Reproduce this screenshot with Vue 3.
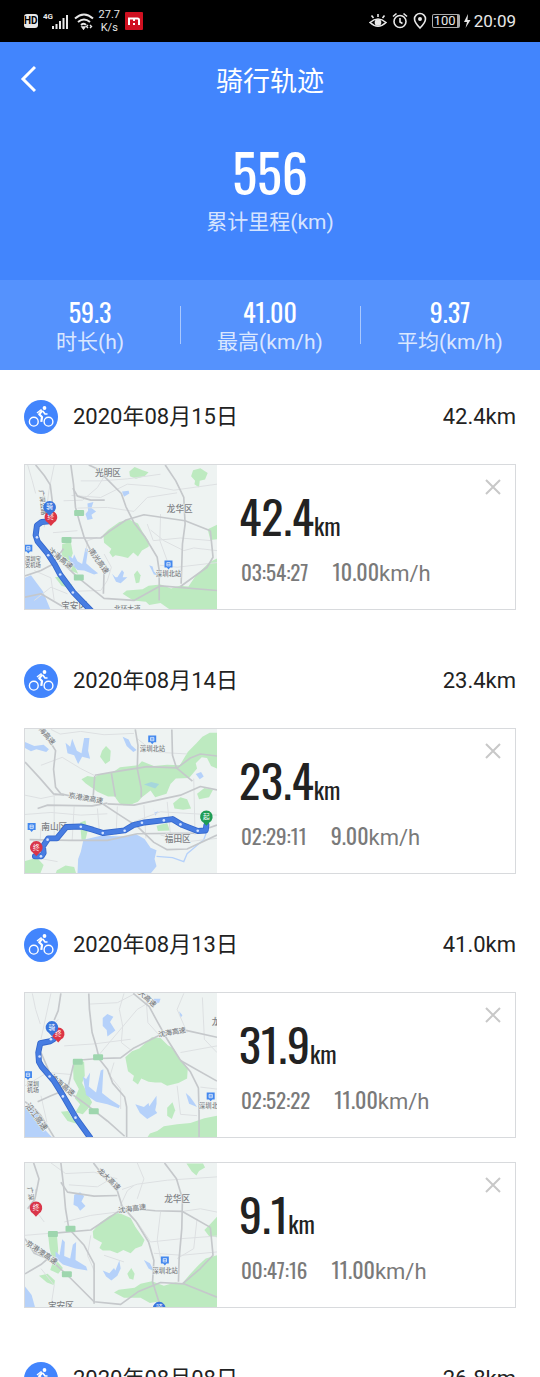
<script setup>
const stats = [
  { value: '59.3', label: '时长(h)' },
  { value: '41.00', label: '最高(km/h)' },
  { value: '9.37', label: '平均(km/h)' }
]

// every map is drawn in its own coordinates, 3 units to a pixel
const maps = {
  baoan: {
    viewBox: '12 12 578 434',
    water: [
      'M12 352L30 344L46 366L66 392L88 446H12Z',
      'M200 128L218 124L212 142L226 152L212 162L216 174L200 178L194 160L202 150Z',
      'M142 284L156 294L160 282L170 302L184 310L194 262L202 266L196 308L212 322L232 338L220 342L190 330L170 328L150 308Z',
      'M274 340L284 350L290 350L304 328L310 336L306 350L320 350L300 368L286 364Z',
      'M386 314L396 318L400 332L412 344L400 342Z',
      'M304 92L324 90L326 98L310 108Z'
    ],
    parks: [
      'M248 222L262 208L296 184L326 176L352 188L366 214L386 244L384 258L364 270L352 288L338 276L322 292L304 288L284 284L276 290L266 276L272 264L250 246Z',
      'M512 46L518 28L540 22L562 36L554 56L538 60L536 80L522 70L524 60Z',
      'M326 32L342 18L366 28L384 34L372 46L346 54L328 46Z',
      'M590 294V446H446L420 428L386 434L376 424L338 420L306 400L318 390L366 386L384 376L420 372L452 384L478 376L504 378L526 346L548 324L568 304Z',
      'M340 342L350 330L360 344L356 366L346 368Z',
      'M124 250L150 244L156 278L150 294L162 318L172 340L148 330L134 306L122 292Z',
      'M102 350L120 348L134 364L154 372L150 384L122 376Z',
      'M562 206L590 192V236L570 238Z'
    ],
    minor: [
      'M20 12L34 60L44 98', 'M100 12L84 90L70 200', 'M180 60H240L320 54L420 40', 'M152 104L240 110L320 70L400 76L460 88L590 70',
      'M252 44L230 80L186 118L128 120', 'M170 142L260 140L340 152L380 110L470 96', 'M380 190L398 240L480 232L574 240',
      'M170 210L96 216', 'M590 270L520 262L490 270L430 240L390 208', 'M230 230L200 240L196 274', 'M250 280L272 320L260 360L240 390L170 392',
      'M418 314L470 320L590 306', 'M40 330L90 352L100 420', 'M420 160L418 240L440 300', 'M40 420L90 380L140 400'
    ],
    roads: [
      'M44 12L70 44L88 72L94 120L90 160', 'M150 12L158 70L164 140L178 190L190 230L220 290L250 334L248 400',
      'M156 82L170 106L210 118H252', 'M204 12L230 24L258 54L302 98L316 138L340 186L374 230L410 290L416 330V420',
      'M142 232H240L266 212L316 178L370 162L494 180L570 210', 'M434 12L466 60L490 110L494 190L486 250L482 370',
      'M570 210L578 290L560 320L480 378', 'M12 346L60 330L94 312L128 264', 'M128 310L170 350L250 414L340 420L420 376L590 390',
      'M12 410L60 400L128 440'
    ],
    tags: [[175, 157], [137, 238], [174, 351]],
    labels: [
      { x: 262, y: 44, text: '光明区', size: 26 }, { x: 478, y: 154, text: '龙华区', size: 26 },
      { x: 444, y: 347, text: '深圳北站', size: 19 }, { x: 36, y: 300, text: '深圳宝', size: 16 }, { x: 36, y: 318, text: '安机场', size: 16 },
      { x: 228, y: 306, text: '南光高速', size: 22, rotate: 54 }, { x: 114, y: 300, text: '沈海高速', size: 22, rotate: 38 },
      { x: 58, y: 126, text: '广深公路', size: 19, rotate: 84 }, { x: 160, y: 447, text: '宝安区', size: 26 }, { x: 320, y: 453, text: '北环大道', size: 20 }
    ],
    stations: [[444, 312], [22, 264]],
    route: 'M84 182L62 184L48 194L44 224L50 242L78 276L102 312L118 342L158 396L210 450',
    arrows: [[48, 230], [82, 284], [118, 342], [156, 396]],
    pins: [{ x: 90, y: 170, color: '#dc3545', text: '终' }, { x: 86, y: 140, color: '#3976dd', text: '骑' }]
  },
  nanshan: {
    viewBox: '12 9 578 437',
    water: [
      'M170 446L172 402L180 380L188 344L240 332L320 334L344 326L372 342L390 368L408 376L402 402L408 424L390 446Z',
      'M134 52L148 64L154 40L168 76L182 84L190 38L206 38L202 76L208 100L184 94L172 116L160 90L140 84Z',
      'M12 50L40 62L68 58L84 72L76 80L46 72L30 78L12 68Z',
      'M306 34L324 42L332 60L348 74L338 80L318 62Z', 'M526 146L542 140L550 154L538 162Z', 'M398 246L402 262L414 258L404 272Z'
    ],
    parks: [
      'M182 162L200 152L222 156L236 146L276 142L298 126L352 120L364 108L400 122L440 118L478 120L502 80L528 54L546 34L568 22H590V130L572 122L560 98L544 96L526 114L530 130L506 158L466 160L450 176L438 206L404 216L390 196L364 216L352 230L326 240L308 240L296 234L282 214L262 214L230 200L194 174Z',
      'M238 94L244 76L256 62L270 76L268 106L254 116Z',
      'M458 234L480 216L500 222L512 250L488 254L462 250Z', 'M530 206L552 188L578 194L566 216L536 222Z',
      'M12 408L48 398L68 420L58 446H12Z', 'M108 436L134 422L160 426L166 446H104Z', 'M178 292L194 286L200 320L194 344L182 344Z', 'M408 302L440 294L448 316L412 318Z'
    ],
    pond: 'M370 178L392 170L416 176L404 190Z',
    minor: [
      'M12 210L60 220L128 206', 'M60 120L124 96L180 130L220 150', 'M90 12L118 26L180 18L250 28L340 24', 'M350 40L400 80L500 86',
      'M100 210V340', 'M160 244L154 346', 'M230 250L236 320', 'M290 244L286 330', 'M370 240L376 340', 'M520 160L524 330', 'M12 268L90 262L180 270L260 266',
      'M60 310L54 400L110 410', 'M340 290L420 260L590 270', 'M590 340L500 350L420 330', 'M440 230L450 330'
    ],
    roads: [
      'M58 12L82 40L104 76L98 132L104 186L120 206L240 232L288 264L350 304L400 352L440 374L500 372L590 330',
      'M12 110L56 158L98 206L130 210', 'M50 250L80 240L214 242L260 234', 'M344 12L352 60L350 130L362 190V216',
      'M222 152L216 230', 'M272 144L284 214', 'M454 12L456 90L468 128L516 168', 'M590 92L540 86L510 98L470 128L380 124L280 140L222 150',
      'M260 236L340 240L480 210L540 184L590 194', 'M26 344L150 346L260 346L350 326L520 324L590 300'
    ],
    coast: 'M408 394L456 398L490 410L500 386L524 366L550 344L560 318',
    tags: [],
    labels: [
      { x: 100, y: 314, text: '南山区', size: 26 }, { x: 472, y: 352, text: '福田区', size: 26 }, { x: 396, y: 77, text: '深圳北站', size: 19 },
      { x: 194, y: 226, text: '京港澳高速', size: 21, rotate: 10 }, { x: 66, y: 28, text: '沈海高速', size: 21, rotate: 50 }
    ],
    stations: [[395, 42], [32, 306]],
    route: 'M42 394L62 394L68 384L66 364L82 340H108L136 306L180 304L216 314L248 324L312 316L338 300L372 292L456 282L486 300L532 318L556 316L558 300',
    arrows: [[60, 394], [80, 344], [180, 305], [246, 324], [312, 317], [364, 293], [430, 286], [480, 298], [532, 317]],
    pins: [{ x: 46, y: 368, color: '#d9364a', text: '终' }, { x: 558, y: 276, color: '#1f9d55', text: '起' }]
  },
  coast: {
    viewBox: '12 9 578 437',
    water: [
      'M12 352L34 350L50 366L60 386L70 420L94 446H12Z',
      'M246 86L260 74L278 82L268 98L284 124L270 134L260 142L258 122L246 110Z',
      'M186 262L196 270L208 250L204 292L226 310L240 244L248 240L244 312L270 332L298 350L294 358L260 346L226 338L196 318Z',
      'M344 346L370 354L384 342L386 352L408 320L408 344L404 364L410 372L380 390L358 372Z',
      'M496 312L508 322L518 336L530 354L506 344Z', 'M400 28H420L416 40L398 42Z', 'M476 66L486 78L480 86Z'
    ],
    parks: [
      'M314 204L334 186L356 178L394 144L420 146L442 168L460 178L478 212L502 238L500 268L474 282L440 290L422 280H404L384 278L362 268L352 286L336 274L340 260L322 246Z',
      'M156 214L190 218L192 260L184 282L198 310L214 340L206 354L186 376L164 370L178 346L162 328L174 300L158 270Z',
      'M120 368L142 366L152 384L172 390L168 404L140 396Z', 'M440 356L456 340L464 364L454 390L440 380Z',
      'M388 434L410 426L430 412L470 406L510 402L552 388L590 380V446H380Z'
    ],
    minor: [
      'M34 12L44 60L58 104', 'M112 90L94 110', 'M90 12L60 150', 'M208 44L290 40L340 14', 'M310 12L296 60L306 110L302 160L330 182',
      'M130 170L220 164L330 150', 'M232 200L350 60L384 40', 'M376 20L382 100L418 140', 'M500 130L470 60L490 12', 'M480 190L590 170',
      'M546 24L552 150L590 190', 'M280 220L268 260L300 300L300 360', 'M60 320L78 400', 'M12 290L80 250L150 256', 'M470 290L480 376L530 380', 'M590 300L540 294'
    ],
    roads: [
      'M120 12L112 64L100 92', 'M204 12L206 60L214 130L226 170L236 210L260 240L276 282L312 324L318 354V446',
      'M338 12L386 52L412 100L440 150L478 210L510 248L534 296L536 370V446', 'M160 214L234 208L300 206L340 176L412 140L456 122L500 124L590 144',
      'M60 190L86 250L120 296L160 320L196 346L260 396L312 442', 'M50 338L90 320L140 300L158 226', 'M12 338L40 358L60 380L100 446', 'M480 214L590 276'
    ],
    tags: [[232, 204], [171, 218], [219, 367]],
    labels: [
      { x: 456, y: 136, text: '沈海高速', size: 21, rotate: -10 }, { x: 368, y: 26, text: '龙大高速', size: 21, rotate: 42 },
      { x: 120, y: 294, text: '沈海高速', size: 22, rotate: 40 }, { x: 40, y: 388, text: '沿江高速', size: 24, rotate: 54 },
      { x: 36, y: 290, text: '深圳', size: 18 }, { x: 36, y: 308, text: '机场', size: 18 }, { x: 574, y: 358, text: '深圳北站', size: 19 },
      { x: 587, y: 107, text: '龙', size: 26 }
    ],
    stations: [[571, 322], [21, 258]],
    route: 'M98 150L88 156L58 162L52 190L54 218L62 232L98 274L128 322L166 388L208 446',
    arrows: [[90, 150], [56, 202], [86, 262], [126, 322], [164, 386]],
    pins: [{ x: 112, y: 134, color: '#dc3545', text: '终' }, { x: 93, y: 115, color: '#3976dd', text: '骑' }]
  },
  longhua: {
    viewBox: '12 12 578 434',
    water: [
      'M12 384L32 410L42 446H12Z', 'M160 108L178 100L190 112L182 128L194 142L178 156L170 144L158 138Z',
      'M104 278L116 290L124 242L132 250L130 292L148 300L156 258L166 250L164 304L196 324L200 336L164 330L126 318L104 298Z',
      'M246 336L266 344L280 328L284 336L296 306L300 330L290 352L272 366L256 354Z', 'M370 304L388 314L402 340L384 330Z'
    ],
    parks: [
      'M216 218L238 192L266 172L294 162L330 178L344 204L372 244L364 262L344 270L330 284L308 274L290 284L268 276L246 276L236 268L244 252L218 238Z',
      'M498 14H548L554 26L536 36L528 50L514 38Z',
      'M590 290V446H430L410 430L388 434L360 418L310 418L280 402L294 394L342 388L360 376L394 368L430 382L464 372L486 374L508 348L534 320L556 300Z',
      'M552 214L572 194L590 174V236L566 232Z', 'M320 346L332 328L342 346L338 364L326 360Z',
      'M82 232L108 230L112 276L106 304L126 328L112 346L88 334L96 310L86 270Z', 'M54 352L80 346L102 366L100 380L78 372Z'
    ],
    minor: [
      'M90 12L134 44L220 40L290 60', 'M144 78L230 84L270 60', 'M350 12L370 60L350 120', 'M304 92L350 76L440 64L590 54', 'M130 190L210 170L290 160',
      'M12 230L60 226L92 224', 'M210 230L200 290L222 340', 'M290 160L320 96L340 80', 'M350 190L390 250L484 240L590 232', 'M420 160L410 244L420 300',
      'M590 160L540 150L486 158', 'M400 284L484 290L590 280', 'M70 190L40 150L44 90', 'M250 290L310 310', 'M60 330L100 380L90 446', 'M530 180L520 270L470 300'
    ],
    roads: [
      'M120 12L128 80L134 150L144 210L190 260L220 316V436', 'M38 12L54 60L42 120L20 150', 'M218 12L244 46L290 96L304 142L346 188L384 250L400 306L396 370L420 446',
      'M92 224L210 214L290 160L340 150L404 156L486 158L570 206', 'M432 12L468 60L486 120L484 210L476 300L474 370',
      'M570 206L578 290L540 330L486 376', 'M12 240L40 284L92 306L150 360L220 430L300 438L352 400L420 372L490 376L590 416', 'M12 346L60 318L92 290', 'M120 70L140 100L220 112L290 110'
    ],
    tags: [[149, 210], [96, 226], [138, 347]],
    labels: [
      { x: 470, y: 130, text: '龙华区', size: 26 }, { x: 434, y: 342, text: '深圳北站', size: 19 },
      { x: 260, y: 66, text: '龙大高速', size: 21, rotate: 44 }, { x: 336, y: 157, text: '沈海高速', size: 21, rotate: -8 },
      { x: 58, y: 288, text: '京港澳高速', size: 22, rotate: 34 }, { x: 22, y: 106, text: '广深', size: 20, rotate: 80 }, { x: 120, y: 453, text: '宝安区', size: 26 }
    ],
    stations: [[433, 306]],
    route: '',
    arrows: [],
    pins: [{ x: 45, y: 148, color: '#d9364a', text: '终' }, { x: 416, y: 450, color: '#3976dd', text: '骑' }]
  }
}

const days = [
  { date: '2020年08月15日', total: '42.4km', rides: [{ map: maps.baoan, distance: '42.4', time: '03:54:27', speed: '10.00' }] },
  { date: '2020年08月14日', total: '23.4km', rides: [{ map: maps.nanshan, distance: '23.4', time: '02:29:11', speed: '9.00' }] },
  {
    date: '2020年08月13日',
    total: '41.0km',
    rides: [
      { map: maps.coast, distance: '31.9', time: '02:52:22', speed: '11.00' },
      { map: maps.longhua, distance: '9.1', time: '00:47:16', speed: '11.00' }
    ]
  },
  { date: '2020年08月08日', total: '26.8km', rides: [] }
]
</script>

<template>
  <div class="page">
    <div class="status-bar">
      <div class="status-left">
        <span class="hd">HD</span>
        <svg class="signal" width="26" height="20" viewBox="0 0 26 20" fill="#e8e8e8">
          <text x="0" y="8" font-size="8" font-weight="700">4G</text>
          <path d="M9 15h2v3H9zM12.500 13h2v5h-2zM16 10h2v8h-2zM19.500 7h2v11h-2zM23 4h2v14h-2z"/>
        </svg>
        <svg width="20" height="18" viewBox="0 0 20 18" fill="none" stroke="#e8e8e8" stroke-width="2">
          <path d="M1 6.500Q10-1.500 19 6.500M4 10q6-5 12 0M7 13q3-2.500 5 0"/>
          <path d="M8 15h3l-1.500 2zM14 13l-1.500 1.500l1.500 1.500M16 13l1.500 1.500l-1.500 1.500" stroke-width="1.400"/>
        </svg>
        <span class="net-speed">27.7<br>K/s</span>
        <svg class="app-badge" width="18" height="18" viewBox="0 0 18 18">
          <rect width="18" height="18" rx="1" fill="#cf1020"/>
          <path d="M4 13V6.500h8.500q1.500 0 1.500 1.500v5M9 6v3M8 12h2" fill="none" stroke="#fff" stroke-width="2"/>
        </svg>
      </div>
      <div class="status-right">
        <svg width="18" height="18" viewBox="0 0 18 18" fill="none" stroke="#e8e8e8" stroke-width="1.600">
          <path d="M1 10.500Q9 3.500 17 10.500Q9 18 1 10.500ZM9 5V2M4.500 6L2.500 3.500M13.500 6l2-2.500"/>
          <circle cx="9" cy="10.500" r="2.500" fill="#e8e8e8"/>
        </svg>
        <svg width="16" height="18" viewBox="0 0 16 18" fill="none" stroke="#e8e8e8" stroke-width="1.600">
          <circle cx="8" cy="9.500" r="6"/>
          <path d="M8 6v4l2.500 1.500M1 4.500L4.500 1.500M15 4.500L11.500 1.500"/>
        </svg>
        <svg width="14" height="18" viewBox="0 0 14 18" fill="none" stroke="#e8e8e8" stroke-width="1.600">
          <path d="M7 16Q1.500 10.500 1.500 7a5.500 5.500 0 0 1 11 0Q12.500 10.500 7 16Z"/>
          <circle cx="7" cy="7" r="1.200" fill="#e8e8e8"/>
        </svg>
        <div class="power">
          <span class="battery">100</span>
          <svg width="8" height="14" viewBox="0 0 8 14" fill="#e8e8e8"><path d="M5 0L1 8h3L2.500 14L7.500 6h-3z"/></svg>
          <span class="clock">20:09</span>
        </div>
      </div>
    </div>

    <header class="hero">
      <div class="nav">
        <button class="back" type="button" aria-label="返回">
          <svg width="16" height="28" viewBox="0 0 16 28" fill="none" stroke="#fff" stroke-width="3">
            <path d="M15 2L3 14L15 26"/>
          </svg>
        </button>
        <h1>骑行轨迹</h1>
      </div>
      <div class="total num">556</div>
      <div class="label">累计里程(km)</div>
    </header>

    <section class="stats">
      <div v-for="s in stats" :key="s.label" class="stat">
        <div class="stat-value num">{{ s.value }}</div>
        <div class="label">{{ s.label }}</div>
      </div>
    </section>

    <main class="list">
      <section v-for="day in days" :key="day.date" class="day">
        <div class="day-head">
          <svg class="bike" width="34" height="34" viewBox="0 0 34 34" fill="none" stroke="#fff">
            <circle cx="17" cy="17" r="17" fill="#4285fd" stroke="none"/>
            <g stroke-width="1.400">
              <circle cx="9.800" cy="21.700" r="4.400"/>
              <circle cx="24.500" cy="21.700" r="4.400"/>
            </g>
            <circle cx="20.500" cy="8" r="1.900" fill="#fff" stroke="none"/>
            <g stroke-linejoin="round">
              <path d="M18.500 10.500L15.200 14.200L18 17L17.300 21.800" stroke-width="2.200"/>
              <path d="M18.800 11L21 14H23.500" stroke-width="1.600"/>
              <path d="M13 13L17.500 9.500" stroke-width="1.400"/>
            </g>
          </svg>
          <h2>{{ day.date }}</h2>
          <span>{{ day.total }}</span>
        </div>

        <article v-for="ride in day.rides" :key="ride.time" class="card">
          <svg class="map" :viewBox="ride.map.viewBox" preserveAspectRatio="xMidYMid slice">
            <rect width="620" height="470" fill="#eef3f2"/>
            <path v-for="d in ride.map.parks" :key="d" :d="d" fill="#bdeac0"/>
            <path v-for="d in ride.map.water" :key="d" :d="d" fill="#b5d1fa"/>
            <path v-if="ride.map.pond" :d="ride.map.pond" fill="#a5d6dc"/>
            <path v-if="ride.map.coast" :d="ride.map.coast" fill="none" stroke="#b5d1fa" stroke-width="4"/>
            <g fill="none" stroke-linejoin="round">
              <path v-for="d in ride.map.minor" :key="d" :d="d" stroke="#dde0e2" stroke-width="3"/>
              <path v-for="d in ride.map.roads" :key="d" :d="d" stroke="#c5c8cb" stroke-width="5"/>
            </g>
            <rect v-for="t in ride.map.tags" :key="t[0]" :x="t[0] - 15" :y="t[1] - 9" width="30" height="18" rx="3" fill="#9ed6ae"/>
            <text
              v-for="(l, i) in ride.map.labels"
              :key="i"
              :x="l.x"
              :y="l.y"
              :font-size="l.size"
              :transform="`rotate(${l.rotate || 0} ${l.x} ${l.y})`"
              class="place"
            >{{ l.text }}</text>
            <g v-for="s in ride.map.stations" :key="s[0]" :transform="`translate(${s[0]} ${s[1]})`">
              <path d="M-12-12H12V9H5L0 15L-5 9H-12Z" fill="#4388ee"/>
              <path d="M-5-6H5V4H-5ZM-5-1H5" fill="none" stroke="#fff" stroke-width="2"/>
            </g>
            <g fill="none" stroke-linejoin="round" stroke-linecap="round">
              <path :d="ride.map.route" stroke="#3467cb" stroke-width="18"/>
              <path :d="ride.map.route" stroke="#477de2" stroke-width="13"/>
            </g>
            <circle v-for="a in ride.map.arrows" :key="a[0]" :cx="a[0]" :cy="a[1]" r="4" fill="#d5e3ff"/>
            <g v-for="p in ride.map.pins" :key="p.color" :transform="`translate(${p.x} ${p.y})`">
              <path d="M0 26L-9 16A19 19 0 1 1 9 16Z" :fill="p.color"/>
              <text y="6" font-size="20" class="pin-text">{{ p.text }}</text>
            </g>
          </svg>
          <div class="info">
            <div class="distance num">{{ ride.distance }}<small>km</small></div>
            <div class="meta">
              <span class="num">{{ ride.time }}</span>
              <span class="speed"><span class="num">{{ ride.speed }}</span>km/h</span>
            </div>
          </div>
          <button class="remove" type="button" aria-label="删除">
            <svg width="16" height="16" viewBox="0 0 16 16" stroke="#c8c8c8" stroke-width="2">
              <path d="M1 1L15 15M15 1L1 15"/>
            </svg>
          </button>
        </article>
      </section>
    </main>
  </div>
</template>

<style>
body {
  margin: 0;
  background: #fff;
}
</style>

<style scoped>
.page {
  display: flex;
  flex-direction: column;
  height: 100vh;
  font-family: Roboto, "Noto Sans CJK SC", sans-serif;
  color: #222;
}

.num {
  font-family: Oswald, "Roboto Condensed", "Liberation Sans Narrow", Roboto, sans-serif;
}

button {
  display: flex;
  padding: 0;
  border: none;
  background: none;
  cursor: pointer;
}

.status-bar {
  flex-shrink: 0;
  display: flex;
  align-items: center;
  justify-content: space-between;
  height: 42px;
  padding: 0 24px;
  background: #000;
  color: #e8e8e8;
}

.status-left,
.status-right {
  display: flex;
  align-items: center;
  gap: 5px;
}

.power {
  display: flex;
  align-items: center;
  gap: 3px;
}

.hd {
  border-radius: 3px;
  background: #e8e8e8;
  color: #000;
  font-size: 10px;
  font-weight: 700;
  line-height: 14px;
}

.net-speed {
  font-size: 11px;
  line-height: 13px;
  text-align: center;
}

.battery {
  padding: 0 1px;
  border: 1px solid #aaa;
  border-right-width: 3px;
  border-radius: 2px;
  font-size: 13px;
  line-height: 12px;
}

.clock {
  font-size: 17px;
}

.hero {
  flex-shrink: 0;
  height: 238px;
  background: #4285fd;
  color: #fff;
  text-align: center;
}

.nav {
  display: grid;
  grid-template-columns: 1fr auto 1fr;
  align-items: center;
  height: 74px;
  padding: 0 20px;
}

h1 {
  margin: 0;
  font-size: 27px;
  font-weight: 400;
}

.total {
  margin-top: 22px;
  font-size: 52px;
  line-height: 68px;
}

.label {
  font-size: 21px;
  line-height: 32px;
  color: rgba(255, 255, 255, 0.8);
}

.stats {
  flex-shrink: 0;
  display: grid;
  grid-template-columns: repeat(3, 1fr);
  align-items: center;
  height: 90px;
  background: #5592fd;
  color: #fff;
  text-align: center;
}

.stat {
  padding-top: 6px;
}

.stat + .stat {
  background: linear-gradient(rgba(255, 255, 255, 0.5), rgba(255, 255, 255, 0.5)) left center / 1px 38px no-repeat;
}

.stat-value {
  font-size: 26px;
  line-height: 28px;
}

.list {
  flex: 1;
  min-height: 0;
  padding: 0 24px;
  overflow-y: auto;
  scrollbar-width: none;
}

.day-head {
  display: flex;
  align-items: center;
  gap: 15px;
  height: 94px;
  font-size: 22px;
  line-height: 30px;
}

h2 {
  flex: 1;
  margin: 0;
  font-size: 22px;
  font-weight: 400;
}

.card {
  display: flex;
  box-sizing: border-box;
  height: 146px;
  margin-bottom: 24px;
  border: 1px solid #d8dadd;
}

.map {
  flex-shrink: 0;
  width: 192px;
  height: 144px;
}

.place {
  fill: #7d8185;
  font-weight: 500;
  stroke: #eef3f2;
  stroke-width: 3px;
  paint-order: stroke;
  text-anchor: middle;
}

.pin-text {
  fill: #fff;
  text-anchor: middle;
}

.info {
  flex: 1;
  display: flex;
  flex-direction: column;
  padding: 18px 0 0 22px;
}

.distance {
  font-size: 46px;
  line-height: 64px;
}

.distance small {
  font-size: 24px;
  line-height: 1;
}

.meta {
  display: flex;
  align-items: baseline;
  gap: 24px;
  padding-left: 2px;
  font-size: 21px;
  line-height: 48px;
  color: #7a7a7a;
}

.speed {
  font-size: 22px;
}

.remove {
  align-self: flex-start;
  padding: 14px;
}
</style>
